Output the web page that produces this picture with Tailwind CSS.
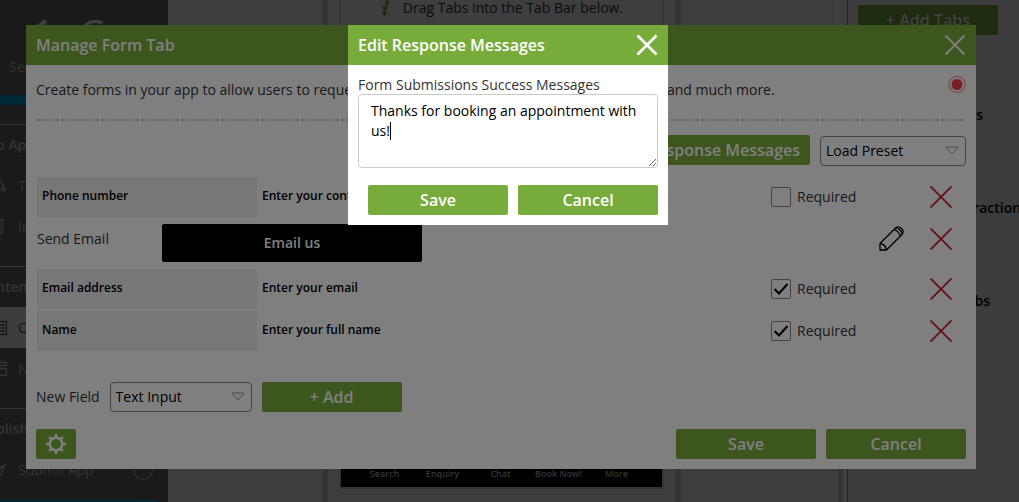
<!DOCTYPE html>
<html lang="en">
<head>
  <meta charset="UTF-8" />
  <meta name="viewport" content="width=device-width, initial-scale=1.0"/>
  <title>Manage Form Tab</title>
  <script src="https://cdn.jsdelivr.net/npm/@tailwindcss/browser@4"></script>
</head>
<body class="font-['Open_Sans',sans-serif] text-sm text-[#333] bg-[#f8f8f8] overflow-hidden">

  <!-- App builder page behind the dialogs -->
  <div class="flex h-screen overflow-hidden">

    <!-- Sidebar -->
    <aside class="w-[168px] shrink-0 bg-[#686868] text-[#ccc] overflow-hidden flex flex-col *:shrink-0">
      <div class="h-[95px] pt-[14px]">
        <div class="flex gap-6 pl-8 text-[40px] leading-10 text-white"><span>1</span><span>Ca</span></div>
        <p class="pl-[9px] pt-[3px] leading-5">See</p>
      </div>
      <div class="h-[10px] bg-[#00a8e0]"></div>
      <div class="h-5 border-b border-[#ddd]"></div>
      <h3 class="h-10 leading-10 font-semibold -ml-1 whitespace-nowrap">o App</h3>
      <nav>
        <a href="#" class="flex items-center h-[41px]">
          <svg class="w-[18px] h-[18px]" viewBox="0 0 18 18" fill="none" stroke="currentColor" stroke-width="1.3"><path d="M-6 8L-1 3l5 6-5 5zM3.500 10q3.500 4 0 4t0-4z"/></svg>
          Theme
        </a>
        <a href="#" class="flex items-center h-[41px]">
          <svg class="w-[18px] h-[18px]" viewBox="0 0 18 18" fill="none" stroke="currentColor" stroke-width="1.3"><path d="M-8 2H2.500v14H-8M-3 6h4M-3 9h4M-3 12h4"/></svg>
          Info
        </a>
      </nav>
      <div class="h-5 border-b border-[#ddd]"></div>
      <h3 class="h-10 leading-10 font-semibold -ml-1">ntent</h3>
      <nav>
        <a href="#" class="flex items-center h-[41px] bg-[#f4f4f4] text-[#555]">
          <svg class="w-[18px] h-[18px]" viewBox="0 0 18 18" fill="none" stroke="currentColor" stroke-width="1.3"><path d="M-7 2.500H6.500v13H-7M-1 6h6M-1 9h6M-1 12h6"/></svg>
          Content
        </a>
        <a href="#" class="flex items-center h-[41px]">
          <svg class="w-[18px] h-[18px]" viewBox="0 0 18 18" fill="none" stroke="currentColor" stroke-width="1.3"><path d="M-7 2.500H6.500v3H-7M-7 8.500H6.500v7H-7"/></svg>
          News
        </a>
      </nav>
      <div class="h-5 border-b border-[#ddd]"></div>
      <h3 class="h-10 leading-10 font-semibold -ml-1">blish</h3>
      <nav>
        <a href="#" class="flex items-center h-[41px]">
          <svg class="w-[18px] h-[18px]" viewBox="0 0 18 18" fill="none" stroke="currentColor" stroke-width="1.3"><path d="M-7 9L5 4 0 15-2 10zM5 4l-7 6"/></svg>
          Submit App
          <svg class="w-5 h-5 ml-auto mr-[15px]" viewBox="0 0 20 20" fill="none" stroke="currentColor" stroke-width="1.2"><circle cx="10" cy="10" r="9.300"/><path d="M5 8h10"/></svg>
        </a>
      </nav>
      <div class="mt-[10px] mr-[10px] h-[10px] bg-[#00a8e0]"></div>
    </aside>

    <!-- Phone preview -->
    <main class="flex-1 min-w-0 flex">
      <div class="w-[154px] shrink-0"></div>
      <div class="w-[6px] shrink-0 bg-[#d0d0d0]"></div>
      <div class="flex-1 min-w-0 flex flex-col px-[11px] pb-[13px]">
        <div class="flex-1 flex flex-col border-2 border-t-0 border-[#d4d4d4]">
          <div class="flex items-start justify-center gap-[11px]">
            <svg class="w-3 h-4" viewBox="0 0 12 16" fill="#76ac3b"><circle cx="7" cy="2.500" r="2.200"/><path d="M1 6l7-.8-2.300 8q0 1.500 3-.6l.6.600Q3 18 2.300 13.500L4 7.200 1 7.300z"/></svg>
            <p class="leading-4">Drag Tabs into the Tab Bar below.</p>
          </div>
          <div class="mt-auto h-10 pr-[2px] bg-black text-[#ccc] text-[9px] leading-3 font-semibold flex items-end justify-center pb-[7px] whitespace-nowrap">
            <span class="w-[58px] text-center">Search</span>
            <span class="w-[58px] text-center">Enquiry</span>
            <span class="w-[58px] text-center">Chat</span>
            <span class="w-[58px] text-center">Book Now!</span>
            <span class="w-[58px] text-center">More</span>
          </div>
        </div>
      </div>
      <div class="w-[6px] shrink-0 bg-[#d0d0d0]"></div>
      <div class="w-[153px] shrink-0 border-r border-[#e4e4e4]"></div>
      <div class="w-[13px] shrink-0 flex flex-col justify-end pl-1 pr-1"><div class="h-10 bg-[#d0d0d0]"></div></div>
    </main>

    <!-- Tab library -->
    <aside class="w-[172px] shrink-0 border-l border-[#888] bg-[#f0f0f0] pt-[5px] text-black font-semibold overflow-hidden">
      <button class="block ml-[10px] w-[140px] h-[30px] rounded-xs bg-[#78ac3a] text-white text-base font-semibold">+ Add Tabs</button>
      <h4 class="mt-[70px] w-[135px] text-right leading-5">Tabs</h4>
      <h4 class="mt-[73px] w-[180px] text-right leading-5">Interactions</h4>
      <h4 class="mt-[73px] w-[142px] text-right leading-5">Tabs</h4>
    </aside>
  </div>

  <!-- Manage form dialog -->
  <div class="fixed inset-0 bg-black/50 flex items-start justify-center pt-[25px] pr-[17px]">
    <section class="w-full max-w-[950px] bg-white" role="dialog" aria-labelledby="manageTitle">
      <header class="h-10 px-[10px] flex items-center justify-between bg-[#78ac3a] text-white">
        <h2 id="manageTitle" class="text-base font-semibold">Manage Form Tab</h2>
        <button aria-label="Close">
          <svg class="w-[22px] h-[22px]" viewBox="0 0 22 22" fill="none" stroke="currentColor" stroke-width="2"><path d="M1.500 1.500l19 19M20.500 1.500l-19 19"/></svg>
        </button>
      </header>

      <div class="p-[10px]">
        <div class="flex items-start justify-between h-11">
          <p class="pt-[5px] leading-5">Create forms in your app to allow users to request quotes, book appointments, collect feedback, and much more.</p>
          <svg class="w-[18px] h-[18px] shrink-0" viewBox="0 0 18 18" fill="none"><circle cx="9" cy="9.500" r="8" stroke="#f4a9ac" stroke-width="1.500"/><circle cx="9" cy="9.500" r="5.500" fill="#f03a44"/></svg>
        </div>
        <div class="h-[2px] bg-[repeating-linear-gradient(90deg,#ccc_0_3px,transparent_3px_5px)]"></div>

        <div class="flex justify-end gap-[10px] mt-[14px]">
          <button class="h-[30px] px-[10px] rounded-xs bg-[#78ac3a] text-white text-base font-semibold">Edit Response Messages</button>
          <div class="relative w-[146px] mt-px">
            <select aria-label="Load preset" class="appearance-none w-full h-[30px] pl-[5px] border border-[#888] rounded-sm text-black">
              <option>Load Preset</option>
            </select>
            <svg class="absolute right-[7px] top-[10px] w-[14px] h-[10px] pointer-events-none" viewBox="0 0 14 10" fill="none" stroke="#999"><path d="M1 1h12L7 8z"/></svg>
          </div>
        </div>

        <div class="pl-px pr-[14px] mt-[11px] flex flex-col gap-[2px]">
          <div class="flex items-center h-10">
            <input aria-label="Field name" value="Phone number" class="w-[220px] h-10 px-[5px] pb-1 bg-[#eee] text-xs font-semibold text-black" />
            <input aria-label="Placeholder" value="Enter your contact number" class="w-[220px] h-10 px-[5px] pb-1 text-xs font-semibold text-black" />
            <label class="ml-auto w-[159px] flex items-center gap-[6px]">
              <input type="checkbox" class="appearance-none w-5 h-5 border border-[#888] rounded-xs" />
              Required
            </label>
            <button aria-label="Delete field">
              <svg class="w-[22px] h-[22px]" viewBox="0 0 22 22" fill="none" stroke="#d0202e" stroke-width="1.900"><path d="M.5.500l21 21M21.500.500l-21 21"/></svg>
            </button>
          </div>

          <div class="flex items-start h-12 pt-[5px]">
            <span class="w-[125px] pt-[5px] leading-5">Send Email</span>
            <button class="w-[260px] h-[38px] rounded-xs bg-black text-white font-semibold">Email us</button>
            <button class="ml-auto mt-[2px]" aria-label="Edit button">
              <svg class="w-[25px] h-[25px]" viewBox="0 0 25 25" fill="none" stroke="#000" stroke-width="1.300" stroke-linejoin="round"><path d="M1 24v-6.500L16.500 2q3-2.500 6 .5t.5 6L7.500 24zM1 17.500q5.500.5 6.500 6.500M14.800 3.700q5 1.300 6.500 6.500M17 1.800q5 1.200 6.200 6.200"/></svg>
            </button>
            <button class="ml-[26px] mt-1" aria-label="Delete field">
              <svg class="w-[22px] h-[22px]" viewBox="0 0 22 22" fill="none" stroke="#d0202e" stroke-width="1.900"><path d="M.5.500l21 21M21.500.500l-21 21"/></svg>
            </button>
          </div>

          <div class="flex items-center h-10">
            <input aria-label="Field name" value="Email address" class="w-[220px] h-10 px-[5px] pb-1 bg-[#eee] text-xs font-semibold text-black" />
            <input aria-label="Placeholder" value="Enter your email" class="w-[220px] h-10 px-[5px] pb-1 text-xs font-semibold text-black" />
            <label class="ml-auto w-[159px] flex items-center gap-[6px]">
              <span class="relative flex">
                <input type="checkbox" checked class="appearance-none w-5 h-5 border border-[#888] rounded-xs" />
                <svg class="absolute inset-0 w-5 h-5 pointer-events-none" viewBox="0 0 20 20" fill="none" stroke="#000" stroke-width="2.200"><path d="M3.500 10l4.500 4.500L16.500 5"/></svg>
              </span>
              Required
            </label>
            <button aria-label="Delete field">
              <svg class="w-[22px] h-[22px]" viewBox="0 0 22 22" fill="none" stroke="#d0202e" stroke-width="1.900"><path d="M.5.500l21 21M21.500.500l-21 21"/></svg>
            </button>
          </div>

          <div class="flex items-center h-10">
            <input aria-label="Field name" value="Name" class="w-[220px] h-10 px-[5px] pb-1 bg-[#eee] text-xs font-semibold text-black" />
            <input aria-label="Placeholder" value="Enter your full name" class="w-[220px] h-10 px-[5px] pb-1 text-xs font-semibold text-black" />
            <label class="ml-auto w-[159px] flex items-center gap-[6px]">
              <span class="relative flex">
                <input type="checkbox" checked class="appearance-none w-5 h-5 border border-[#888] rounded-xs" />
                <svg class="absolute inset-0 w-5 h-5 pointer-events-none" viewBox="0 0 20 20" fill="none" stroke="#000" stroke-width="2.200"><path d="M3.500 10l4.500 4.500L16.500 5"/></svg>
              </span>
              Required
            </label>
            <button aria-label="Delete field">
              <svg class="w-[22px] h-[22px]" viewBox="0 0 22 22" fill="none" stroke="#d0202e" stroke-width="1.900"><path d="M.5.500l21 21M21.500.500l-21 21"/></svg>
            </button>
          </div>
        </div>

        <div class="flex items-center gap-[10px] mt-[31px]">
          <label for="fieldType">New Field</label>
          <div class="relative w-[142px]">
            <select id="fieldType" class="block appearance-none w-full h-[30px] pl-[5px] border border-[#888] rounded-sm text-black">
              <option>Text Input</option>
            </select>
            <svg class="absolute right-[7px] top-[10px] w-[14px] h-[10px] pointer-events-none" viewBox="0 0 14 10" fill="none" stroke="#999"><path d="M1 1h12L7 8z"/></svg>
          </div>
          <button class="w-[140px] h-[30px] rounded-xs bg-[#78ac3a] text-white text-base font-semibold">+ Add</button>
        </div>

        <footer class="flex gap-[10px] mt-[17px]">
          <button class="w-10 h-[30px] mr-auto rounded-xs bg-[#78ac3a] text-white flex items-center justify-center" aria-label="Settings">
            <svg class="w-5 h-5" viewBox="0 0 20 20" fill="none" stroke="currentColor"><circle cx="10" cy="10" r="6.300" stroke-width="2.400"/><path stroke-width="2.600" d="M10 0v3M10 17v3M0 10h3M17 10h3M3.200 3.200l2 2M14.800 14.800l2 2M3.200 16.800l2-2M14.800 5.200l2-2"/></svg>
          </button>
          <button class="w-[140px] h-[30px] rounded-xs bg-[#78ac3a] text-white text-base font-semibold">Save</button>
          <button class="w-[140px] h-[30px] rounded-xs bg-[#78ac3a] text-white text-base font-semibold">Cancel</button>
        </footer>
      </div>
    </section>
  </div>

  <!-- Response message dialog -->
  <div class="fixed inset-0 bg-black/50 flex items-start justify-center pt-[25px] pr-[3px]">
    <section class="w-full max-w-[320px] bg-white" role="dialog" aria-labelledby="messageTitle">
      <header class="h-10 px-[10px] flex items-center justify-between bg-[#78ac3a] text-white">
        <h2 id="messageTitle" class="text-base font-semibold">Edit Response Messages</h2>
        <button aria-label="Close">
          <svg class="w-[22px] h-[22px]" viewBox="0 0 22 22" fill="none" stroke="currentColor" stroke-width="2.600"><path d="M1.500 1.500l19 19M20.500 1.500l-19 19"/></svg>
        </button>
      </header>
      <div class="p-[10px]">
        <label for="successMessage" class="block leading-[19px]">Form Submissions Success Messages</label>
        <div class="relative">
          <textarea id="successMessage" class="block w-full h-[74px] px-3 py-[6px] border border-[#ccc] rounded-sm leading-5 text-black resize">Thanks for booking an appointment with us!</textarea>
          <!-- text cursor -->
          <span class="absolute left-8 top-7 w-px h-[18px] bg-black"></span>
        </div>
        <div class="flex justify-end gap-[10px] mt-[17px]">
          <button class="w-[140px] h-[30px] rounded-xs bg-[#78ac3a] text-white text-base font-semibold">Save</button>
          <button class="w-[140px] h-[30px] rounded-xs bg-[#78ac3a] text-white text-base font-semibold">Cancel</button>
        </div>
      </div>
    </section>
  </div>

</body>
</html>
